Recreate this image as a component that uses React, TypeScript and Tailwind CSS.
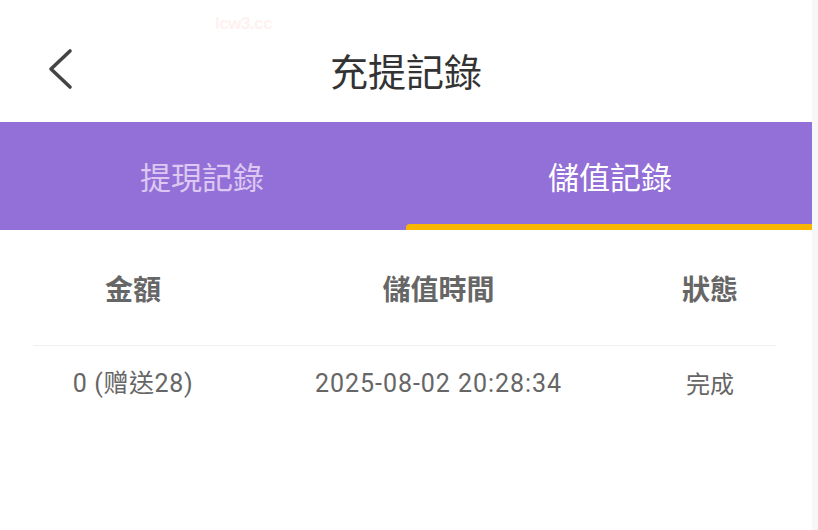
import React from "react";

export default function App() {
  const font = { fontFamily: '"Noto Sans CJK TC", "Noto Sans", Roboto, sans-serif' };
  const num = { fontFamily: 'Roboto, "Noto Sans CJK TC", sans-serif' };
  return (
    <div className="flex w-[818px] h-[530px] bg-[#f6f7f9]" style={font}>
      <div className="w-[812px] h-full bg-white flex flex-col">
        <div className="relative h-[122px] flex items-center justify-center">
          <div
            className="absolute left-[215px] top-[15px] text-[17px] font-bold tracking-[-0.5px] text-[#fff1f1] leading-none"
            style={{ fontFamily: '"Liberation Sans Narrow", "Liberation Sans", sans-serif' }}
          >
            lcw3.cc
          </div>
          <svg className="absolute left-[46px] top-[48px]" width="28" height="42" viewBox="0 0 28 42">
            <path d="M24 3 L5 21 L24 39" fill="none" stroke="#444" strokeWidth="3.6" strokeLinecap="round" strokeLinejoin="round" />
          </svg>
          <div className="text-[38px] text-[#333] leading-none mt-[18px]">充提記錄</div>
        </div>
        <div className="h-[108px] bg-[#9370d8] flex relative">
          <div className="flex-1 flex items-center justify-center text-[31px] text-[#dcc8f2] pb-[2px] pr-[4px] leading-none">提現記錄</div>
          <div className="flex-1 flex items-center justify-center text-[31px] text-white pb-[2px] leading-none relative">
            儲值記錄
            <div className="absolute left-[-2px] right-0 bottom-0 h-[6px] bg-[#f8b600] rounded-tl-[4px]"></div>
          </div>
        </div>
        <div className="px-[33px] pr-[36px]">
          <div className="grid grid-cols-[200px_411px_1fr] h-[116px] items-center border-b border-[#efefef] text-[28px] font-bold text-[#666] leading-none">
            <div className="text-center">金額</div>
            <div className="text-center">儲值時間</div>
            <div className="text-center">狀態</div>
          </div>
          <div className="grid grid-cols-[200px_411px_1fr] h-[74px] items-center text-[25px] text-[#666] leading-none" style={num}>
            <div className="text-center tracking-[0.6px]">0 (赠送28)</div>
            <div className="text-center tracking-[0.95px]">2025-08-02 20:28:34</div>
            <div className="text-center text-[24px]" style={font}>完成</div>
          </div>
        </div>
      </div>
    </div>
  );
}
